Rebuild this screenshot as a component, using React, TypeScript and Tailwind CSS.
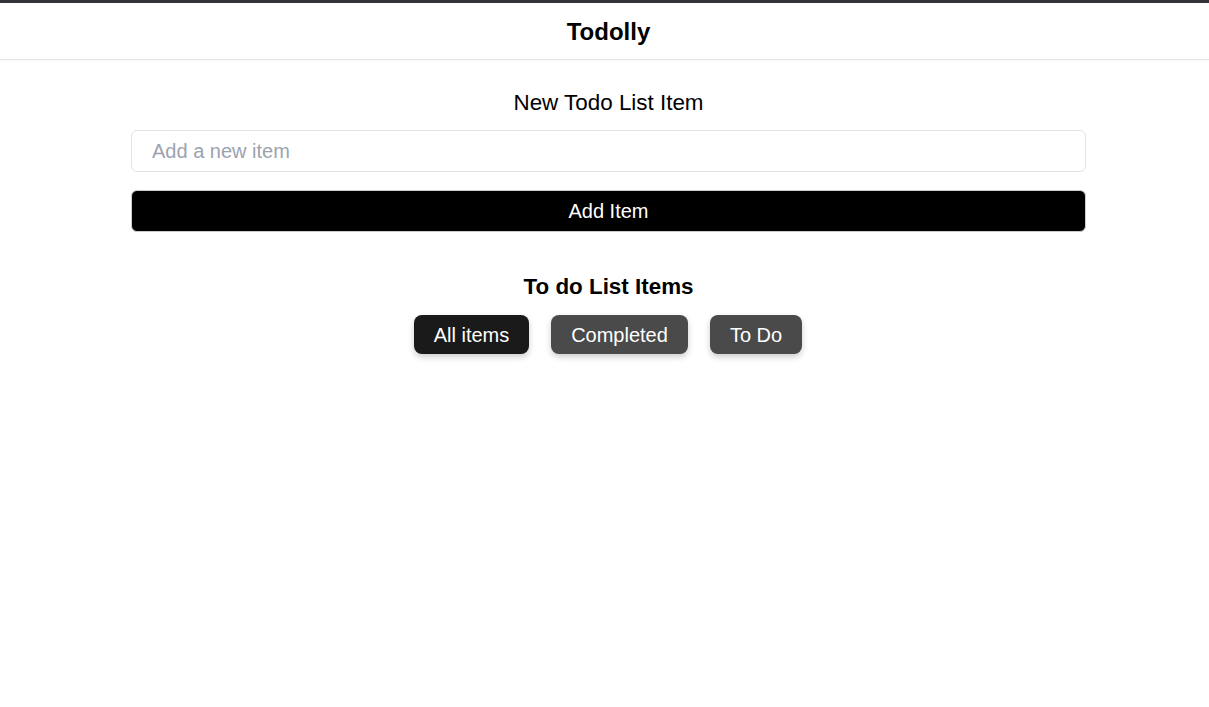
export default function App() {
  const font = { fontFamily: '"Liberation Sans", Arial, sans-serif' };
  return (
    <div className="min-h-screen bg-white border-t-[3px] border-[#333338]" style={font}>
      <header className="h-[57px] pl-2 pt-[2px] flex items-center justify-center border-b border-[#e5e5e5] shadow-[0_1px_2px_rgba(0,0,0,0.04)]">
        <h1 className="text-[24px] font-bold text-black">Todolly</h1>
      </header>
      <div className="pl-2">
        <main className="w-[955px] mx-auto flex flex-col">
          <h2 className="text-[22.4px] text-black text-center mt-[29px] leading-[28px]">New Todo List Item</h2>
          <input
            className="mt-[13px] h-[42px] w-full rounded-[6px] border border-[#e3e3e3] px-[20px] text-[20px] text-black placeholder:text-[#9ca3af] outline-none"
            placeholder="Add a new item"
            style={font}
          />
          <button
            className="mt-[18px] h-[42px] w-full rounded-[6px] bg-black text-white text-[20px] border border-[#ccc]"
            style={font}
          >
            Add Item
          </button>
          <h3 className="text-[22.4px] font-bold text-black text-center mt-[41px] leading-[28px]">To do List Items</h3>
          <div className="mt-[14px] flex justify-center gap-[22px] pr-[1px]">
            <button className="h-[39px] w-[115px] rounded-[8px] bg-[#1a1a1a] text-white text-[20px] shadow-[0_3px_6px_rgba(0,0,0,0.2)]" style={font}>All items</button>
            <button className="h-[39px] w-[137px] rounded-[8px] bg-[#4a4a4a] text-white text-[20px] shadow-[0_3px_6px_rgba(0,0,0,0.2)]" style={font}>Completed</button>
            <button className="h-[39px] w-[92px] rounded-[8px] bg-[#4a4a4a] text-white text-[20px] shadow-[0_3px_6px_rgba(0,0,0,0.2)]" style={font}>To Do</button>
          </div>
        </main>
      </div>
    </div>
  );
}
